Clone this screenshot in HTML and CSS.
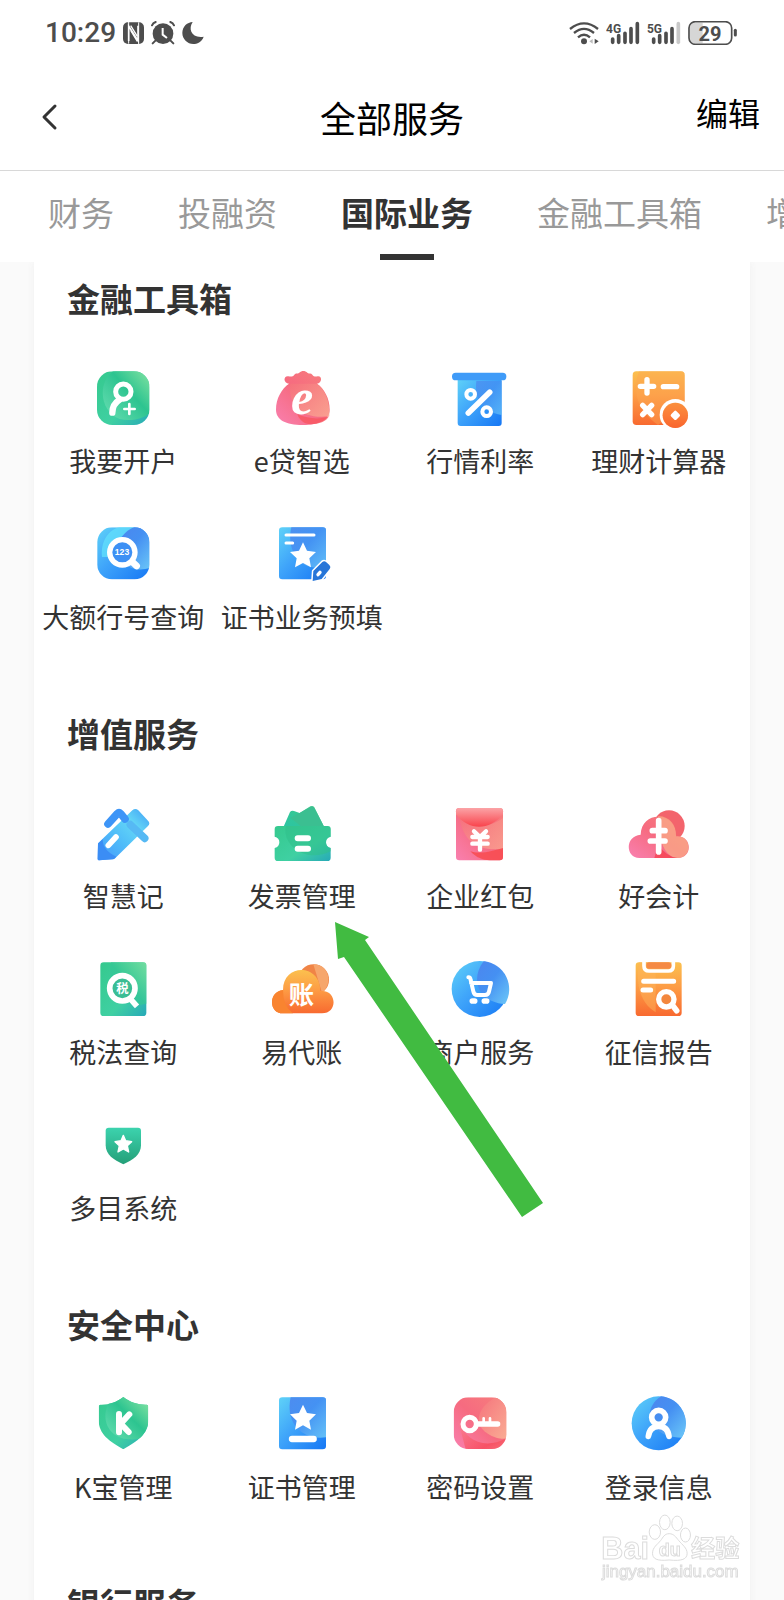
FILE: index.html
```html
<!DOCTYPE html>
<html lang="zh-CN">
<head>
<meta charset="utf-8">
<meta name="viewport" content="width=device-width, initial-scale=1">
<title>全部服务</title>
<link rel="stylesheet" href="styles.css">
</head>
<body>
<svg class="defs" width="0" height="0" aria-hidden="true">
  <defs>
    <linearGradient id="green" x1="1" y1="0" x2="0" y2="1"><stop offset="0" stop-color="#7fe0a0"/><stop offset=".5" stop-color="#35c795"/><stop offset="1" stop-color="#2bc4a4"/></linearGradient>
    <linearGradient id="greenDeep" x1="0" y1="0" x2="1" y2="1"><stop offset="0" stop-color="#35c98e"/><stop offset=".6" stop-color="#3fd0a2"/><stop offset="1" stop-color="#27a9b8"/></linearGradient>
    <linearGradient id="greenSoft" x1="1" y1="0" x2="0" y2="1"><stop offset="0" stop-color="#8ce6a4"/><stop offset=".45" stop-color="#2dc490"/><stop offset="1" stop-color="#6be0b4"/></linearGradient>
    <linearGradient id="teal" x1="0" y1="0" x2="0" y2="1"><stop offset="0" stop-color="#3cd3ae"/><stop offset="1" stop-color="#249f78"/></linearGradient>
    <linearGradient id="blue" x1="0" y1="0" x2="1" y2="1"><stop offset="0" stop-color="#5fd2f8"/><stop offset=".45" stop-color="#3fa4fa"/><stop offset="1" stop-color="#1677f4"/></linearGradient>
    <linearGradient id="blueSoft" x1="0" y1="0" x2="1" y2="1"><stop offset="0" stop-color="#4c86ee"/><stop offset=".45" stop-color="#4590f2"/><stop offset="1" stop-color="#6cc8f8"/></linearGradient>
    <linearGradient id="sky" x1="1" y1="0" x2="0" y2="1"><stop offset="0" stop-color="#3f9df6"/><stop offset=".3" stop-color="#63d6f6"/><stop offset=".6" stop-color="#4fbcf9"/><stop offset="1" stop-color="#4796fb"/></linearGradient>
    <linearGradient id="red" x1="0" y1="1" x2="1" y2="0"><stop offset="0" stop-color="#f980b0"/><stop offset=".5" stop-color="#f66b80"/><stop offset="1" stop-color="#f77f7c"/></linearGradient>
    <linearGradient id="redDeep" x1="0" y1="0" x2="1" y2="1"><stop offset="0" stop-color="#fa8a98"/><stop offset=".7" stop-color="#f74454"/><stop offset="1" stop-color="#f9737a"/></linearGradient>
    <linearGradient id="redSoft" x1="0" y1="0" x2="1" y2="1"><stop offset="0" stop-color="#f5737c"/><stop offset="1" stop-color="#faac94"/></linearGradient>
    <linearGradient id="redTop" x1="0" y1="0" x2="0" y2="1"><stop offset="0" stop-color="#fba3a6"/><stop offset="1" stop-color="#f9434c"/></linearGradient>
    <linearGradient id="orange" x1="0" y1="0" x2="0" y2="1"><stop offset="0" stop-color="#fbc04e"/><stop offset=".45" stop-color="#fd9d45"/><stop offset="1" stop-color="#f86a30"/></linearGradient>
    <clipPath id="clipAccount"><rect x="200" y="63" width="157" height="161" rx="46"/></clipPath>
    <clipPath id="clipBank"><rect x="201" y="51" width="156" height="156" rx="44"/></clipPath>
    <clipPath id="clipKey"><rect x="162" y="51" width="158" height="155" rx="44"/></clipPath>
    <clipPath id="clipShield"><path d="M279 50c-20 16-46 24-69 23q-5 0-5 6v40c0 42 32 64 74 88 42-24 75-46 75-88V79q0-6-5-6c-24 1-50-7-70-23z"/></clipPath>
    <path id="star" d="M0-38 12-13 39-9 19 10 24 37 0 24-24 37-19 10-39-9-12-13z" stroke-linejoin="round"/>
  </defs>
</svg>

<div class="screen">
  <div class="status">
    <div class="status-group">
      <span class="clock">10:29</span>
      <svg width="21" height="22" viewBox="369 65 63 66"><rect x="369" y="66" width="63" height="65" rx="15" fill="#4d4d4d"/><path d="M386 122V77l28 44V76" fill="none" stroke="#fff" stroke-width="5"/><path d="M386 64v66M416 66v65" stroke="#fff" stroke-width="3"/><path d="m392 90 20 33M392 76l20 32" stroke="#fff" stroke-width="4"/></svg>
      <svg class="alarm" width="24" height="24" viewBox="456 63 72 72"><circle cx="492" cy="101" r="31" fill="#4d4d4d"/><path d="m470 121-9 9M514 121l9 9M459 76q3-7 11-10M525 76q-3-7-11-10" fill="none" stroke="#4d4d4d" stroke-width="6" stroke-linecap="round"/><path d="M491 84v20l13 10" fill="none" stroke="#fff" stroke-width="6"/></svg>
      <svg width="22" height="24" viewBox="551 63 66 72"><path d="M583 66c-14 20-4 50 33 44-6 17-20 22-31 22-18 0-33-15-33-33 0-20 15-32 31-33z" fill="#4d4d4d"/></svg>
    </div>
    <div class="status-group">
      <svg width="30" height="24" viewBox="527 63 90 72"><g fill="none" stroke="#4d4d4d" stroke-width="7"><path d="M530 87q42-34 84 0M542 99q30-25 60 0M554 112q18-16 36 0"/></g><circle cx="572" cy="124" r="9" fill="#4d4d4d"/><path d="m588 124 10-7v14z" fill="#bbb"/><path d="m604 116 12 8-12 8z" fill="#4d4d4d"/></svg>
      <svg width="34" height="24" viewBox="640 63 102 72"><text class="net" x="640" y="98">4G</text><path d="M660 117v10M678 107v20M697 100v27M715 86v41M734 71v56" stroke="#4d4d4d" stroke-width="11" stroke-linecap="round"/></svg>
      <svg width="34" height="24" viewBox="764 63 102 72"><text class="net" x="764" y="98">5G</text><path d="M784 117v10M802 107v20M821 100v27M839 86v41" stroke="#4d4d4d" stroke-width="11" stroke-linecap="round"/><path d="M858 71v56" stroke="#c8c8c8" stroke-width="11" stroke-linecap="round"/></svg>
      <svg width="50" height="24" viewBox="887 63 150 72"><path d="M909 68h22v62h-22q-16 0-16-16V84q0-16 16-16z" fill="#d6d6d6"/><rect x="890" y="65" width="128" height="68" rx="19" fill="none" stroke="#4d4d4d" stroke-width="5"/><path d="M1029 91v14" stroke="#4d4d4d" stroke-width="9" stroke-linecap="round"/><text class="level" x="953" y="122">29</text></svg>
    </div>
  </div>

  <header class="bar">
    <button class="back" aria-label="返回"><svg width="18" height="28" viewBox="0 0 18 28"><path d="M15 3 4 14l11 11" fill="none" stroke="#333" stroke-width="3" stroke-linecap="round" stroke-linejoin="round"/></svg></button>
    <h1>全部服务</h1>
    <button class="edit">编辑</button>
  </header>

  <nav class="tabs">
    <button>财务</button>
    <button>投融资</button>
    <button class="active">国际业务</button>
    <button>金融工具箱</button>
    <button>增值服务</button>
  </nav>

  <main class="content">
    <div class="card">
      <section>
        <h2>金融工具箱</h2>
        <ul class="grid">
          <li><button class="item">
            <svg class="icon" viewBox="182 47 192 192"><g clip-path="url(#clipAccount)"><path d="M200 63h157v161H200z" fill="url(#greenDeep)"/><path d="M248 63c-50 38-36 124 20 143 40 10 80-6 92-20V50z" fill="url(#greenSoft)"/></g><g fill="none" stroke="#fff" stroke-linecap="round"><circle cx="279" cy="124" r="23" stroke-width="15"/><path d="M268 148q-22 14-22 39" stroke-width="19"/><path d="M297 161v30M282 176h31" stroke-width="8"/></g></svg>
            <span>我要开户</span></button></li>
          <li><button class="item">
            <svg class="icon" viewBox="718 47 192 192"><path d="M775 100c-18-2-17-24-2-22 8 1 13 2 18-5 4-5 9-2 14-5 9-8 17-8 26 0 5 3 10 0 14 5 5 7 10 6 16 5 14-2 14 20-2 22 22 15 38 44 38 78 0 30-30 46-81 46s-80-16-80-46c0-34 17-63 39-78z" fill="url(#red)"/><path d="M778 100c-6 60 30 108 118 98 2-46-14-82-37-98z" fill="url(#redSoft)" opacity=".8"/><path d="M800 192c34 14 68 16 95 6-8 16-30 24-55 24-18 0-34-12-40-30z" fill="#f8545e" opacity=".75"/><text class="e" x="814" y="192">e</text></svg>
            <span>e贷智选</span></button></li>
          <li><button class="item">
            <svg class="icon" viewBox="145 47 192 192"><path d="M174 85h132v133q0 9-9 9H183q-9 0-9-9z" fill="url(#blue)"/><path d="M230 92c-6 50 14 92 76 102V92z" fill="url(#blueSoft)" opacity=".7"/><rect x="157" y="67" width="163" height="23" rx="11" fill="#3f9bf8"/><path d="M206 188 270 126" stroke="#fff" stroke-width="17" stroke-linecap="round"/><g fill="none" stroke="#fff" stroke-width="12"><circle cx="213" cy="132" r="13"/><circle cx="261" cy="184" r="13"/></g></svg>
            <span>行情利率</span></button></li>
          <li><button class="item">
            <svg class="icon" viewBox="682 47 192 192"><rect x="699" y="63" width="156" height="161" rx="11" fill="url(#orange)"/><path d="M718 63h126q11 0 11 11v90l-80 60c-60-40-80-100-57-161z" fill="#fda653" opacity=".45"/><circle cx="827" cy="193" r="47" fill="#fff"/><circle cx="827" cy="195" r="38" fill="url(#orange)"/><circle cx="827" cy="195" r="38" fill="#f9602c" opacity=".5"/><path d="m827 186 9 9-9 9-9-9z" fill="#fff" stroke="#fff" stroke-width="10" stroke-linejoin="round"/><path d="M742 88v40M722 108h40M791 109h40M729 165l27 28M756 165l-27 28" stroke="#fff" stroke-width="16" stroke-linecap="round"/></svg>
            <span>理财计算器</span></button></li>
          <li><button class="item">
            <svg class="icon" viewBox="182 35 192 192"><g clip-path="url(#clipBank)"><path d="M200 51h157v157H200z" fill="url(#blue)"/><path d="M215 140c-4-50 20-80 52-90h45c-44 30-48 70-40 90z" fill="#62e0fb" opacity=".75"/><path d="M312 50c-50 20-80 90-10 122 20 8 40 6 60 0V50z" fill="url(#blueSoft)"/></g><path d="m300 149 19 18" stroke="#fff" stroke-width="20" stroke-linecap="round"/><circle cx="276" cy="126" r="38" fill="#3d90f4" stroke="#fff" stroke-width="16"/><text class="in-icon num" x="275" y="135">123</text></svg>
            <span>大额行号查询</span></button></li>
          <li><button class="item">
            <svg class="icon" viewBox="718 35 192 192"><rect x="745" y="51" width="141" height="156" rx="10" fill="url(#blue)"/><path d="M782 51h94q10 0 10 10v108c-80 20-120-50-104-118z" fill="url(#blueSoft)" opacity=".85"/><path d="M766 74h84M766 98h20" stroke="#fff" stroke-width="9" stroke-linecap="round"/><use href="#star" x="817" y="134" fill="#fff"/><path d="m846 212 2-30 27-27q6-5 12 1l9 8q6 6 1 12l-24 30z" fill="#2675d8" stroke="#fff" stroke-width="9" stroke-linejoin="round" paint-order="stroke"/><path d="m862 193 6-7" stroke="#fff" stroke-width="10" stroke-linecap="round"/></svg>
            <span>证书业务预填</span></button></li>
        </ul>
      </section>

      <section>
        <h2>增值服务</h2>
        <ul class="grid">
          <li><button class="item">
            <svg class="icon" viewBox="182 29 192 192"><path d="m203 156 103-99q9-8 18 0l29 31q8 8 0 16l-101 99-46 4q-4 0-4-4z" fill="url(#sky)"/><path d="m203 157 14-13q0 34 41 52l-9 8-43 3q-4 0-4-4z" fill="#3b8df5"/><path d="m233 98 28-31q5-5 10 0l13 16" fill="none" stroke="#3d95f7" stroke-width="23" stroke-linecap="round" stroke-linejoin="round"/><path d="m300 100 43 41" stroke="#56b9f4" stroke-width="23" stroke-linecap="round"/><path d="m234 162 23-25" stroke="#fff" stroke-width="17" stroke-linecap="round"/></svg>
            <span>智慧记</span></button></li>
          <li class="target"><button class="item">
            <svg class="icon" viewBox="718 29 192 192"><path d="m758 108 20-46q5-6 12-3l17 6 32-20q7-3 12 3l30 60z" fill="url(#green)"/><path d="m807 65-28 14 36 29h66l-30-59q-5-6-12-3z" fill="#3bbf91"/><path d="M742 104h148q10 0 10 10v22q-14 3-14 17t14 17v29q0 10-10 10H742q-10 0-10-10v-29q14-3 14-17t-14-17v-22q0-10 10-10z" fill="url(#greenDeep)"/><path d="M765 104h125q10 0 10 10v22q-14 3-14 17t14 17v10c-70 36-146-14-135-76z" fill="#2fc08a" opacity=".55"/><path d="M801 141h31M801 172h31" stroke="#fff" stroke-width="18" stroke-linecap="round"/></svg>
            <span>发票管理</span></button>
            <svg class="arrow" viewBox="0 0 210 297" aria-hidden="true"><path d="M0 0 34 15 30 18 208 281 187 295 9 35 3 37z" fill="#41bb41"/></svg>
          </li>
          <li><button class="item">
            <svg class="icon" viewBox="145 29 192 192"><rect x="169" y="50" width="141" height="157" rx="10" fill="url(#red)"/><path d="M310 80v92c-70 10-120-20-130-92 40 30 90 30 130 0z" fill="url(#redSoft)" opacity=".7"/><path d="M212 180c30 10 70-2 98-10v27q0 10-10 10h-30c-20 0-40-8-58-27z" fill="#f84b50" opacity=".85"/><path d="M179 50h121q10 0 10 10v9c-40 50-104 50-141 0v-9q0-10 10-10z" fill="url(#redTop)"/><path d="m223 120 18 17 18-17M241 137v38M218 137h46M218 157h46" fill="none" stroke="#fff" stroke-width="13" stroke-linecap="round" stroke-linejoin="round"/></svg>
            <span>企业红包</span></button></li>
          <li><button class="item">
            <svg class="icon" viewBox="682 29 192 192"><circle cx="808" cy="104" r="47" fill="#f3646c"/><path d="M719 200c-42 0-44-66 4-70 2-72 104-72 107 5 48-4 50 65 5 65z" fill="url(#red)"/><path d="M776 74c38 2 54 30 53 61 48-4 50 65 5 65-30 0-60-40-58-126z" fill="#fab389" opacity=".65"/><path d="M776 160q24 36 58 40h-70z" fill="#f53c48" opacity=".7"/><path d="M777 88v94M758 118h38M752 149h44" stroke="#fff" stroke-width="17" stroke-linecap="round"/></svg>
            <span>好会计</span></button></li>
          <li><button class="item">
            <svg class="icon" viewBox="182 47 192 192"><rect x="210" y="63" width="138" height="161" rx="10" fill="url(#greenDeep)"/><path d="M242 63h96q10 0 10 10v114c-80 20-120-40-106-124z" fill="url(#green)" opacity=".8"/><path d="m302 175 18 20" stroke="#fff" stroke-width="17"/><circle cx="276" cy="141" r="38" fill="#3abd94" stroke="#fff" stroke-width="17"/><text class="in-icon tax" x="276" y="154">税</text></svg>
            <span>税法查询</span></button></li>
          <li><button class="item">
            <svg class="icon" viewBox="718 47 192 192"><circle cx="849" cy="115" r="46" fill="#f08446"/><path d="M848 69c50 0 58 62 26 85z" fill="#f6a66c"/><path d="M757 216c-44 0-44-66 0-70 0-80 112-80 112 3 50-6 54 67 5 67z" fill="url(#orange)"/><path d="M757 146q0 50 30 70h-30c-44 0-44-66 0-70z" fill="#f98430"/><text class="in-icon ledger" x="812" y="189">账</text></svg>
            <span>易代账</span></button></li>
          <li><button class="item">
            <svg class="icon" viewBox="145 47 192 192"><circle cx="240" cy="143" r="84" fill="url(#blue)"/><path d="M252 60c-40 50-20 122 64 128a84 84 0 0 0-64-128z" fill="url(#blueSoft)"/><path d="M206 108q6 0 7 8l8 34q2 11 12 11h23q10 0 12-10l6-26H214" fill="none" stroke="#fff" stroke-width="12" stroke-linecap="round" stroke-linejoin="round"/><path d="M218 179h7M254 179h7" stroke="#fff" stroke-width="17" stroke-linecap="round"/></svg>
            <span>商户服务</span></button></li>
          <li><button class="item">
            <svg class="icon" viewBox="682 47 192 192"><rect x="708" y="63" width="138" height="161" rx="10" fill="url(#orange)"/><path d="M718 63h50v150c-50-30-60-90-50-150z" fill="#fdb45a" opacity=".5"/><path d="M733 60v14q0 15 15 15h58q15 0 15-15V60" fill="none" stroke="#fff" stroke-width="11"/><rect x="740" y="63" width="75" height="19" rx="9" fill="#f58a45"/><path d="M732 120h90M730 146h23" stroke="#fff" stroke-width="15" stroke-linecap="round"/><path d="m818 191 13 17" stroke="#fff" stroke-width="17" stroke-linecap="round"/><circle cx="800" cy="174" r="23" fill="#f3873d" stroke="#fff" stroke-width="16"/></svg>
            <span>征信报告</span></button></li>
          <li><button class="item">
            <svg class="icon" viewBox="182 515 192 192"><path d="M235 559h88q9 0 9 9v44c0 28-24 44-53 57-29-13-53-29-53-57v-44q0-9 9-9z" fill="url(#teal)"/><path d="m279 582 7 16 18 3-13 12 4 19-16-9-16 9 4-19-13-12 18-3z" fill="#fff" stroke="#fff" stroke-width="4" stroke-linejoin="round"/></svg>
            <span>多目系统</span></button></li>
        </ul>
      </section>

      <section>
        <h2>安全中心</h2>
        <ul class="grid">
          <li><button class="item">
            <svg class="icon" viewBox="182 35 192 192"><g clip-path="url(#clipShield)"><path d="M204 50h150v158H204z" fill="url(#greenDeep)"/><path d="M245 50c-46 70-4 124 50 127 30 2 50-4 60-12V50z" fill="url(#greenSoft)"/></g><path d="M266 101v55M297 102l-26 28 24 25" fill="none" stroke="#fff" stroke-width="18" stroke-linecap="round" stroke-linejoin="round"/></svg>
            <span>K宝管理</span></button></li>
          <li><button class="item">
            <svg class="icon" viewBox="718 35 192 192"><rect x="745" y="51" width="141" height="156" rx="10" fill="url(#blue)"/><path d="M780 51h96q10 0 10 10v110c-80 10-122-50-106-120z" fill="url(#blueSoft)" opacity=".9"/><use href="#star" x="817" y="111" fill="#fff"/><path d="M784 176h65" stroke="#fff" stroke-width="19" stroke-linecap="round"/></svg>
            <span>证书管理</span></button></li>
          <li><button class="item">
            <svg class="icon" viewBox="145 35 192 192"><g clip-path="url(#clipKey)"><path d="M162 51h158v156H162z" fill="url(#red)"/><path d="M175 120c20 60 80 90 145 54v40H200z" fill="url(#redDeep)" opacity=".7"/><path d="M290 50c-60 30-80 96 0 122 14 4 24 4 32 2V50z" fill="url(#redSoft)"/></g><circle cx="210" cy="131" r="20" fill="none" stroke="#fff" stroke-width="15"/><path d="M234 131h60" stroke="#fff" stroke-width="16" stroke-linecap="round"/><path d="M252 126v-12M271 126v-12" stroke="#fff" stroke-width="8" stroke-linecap="round"/></svg>
            <span>密码设置</span></button></li>
          <li><button class="item">
            <svg class="icon" viewBox="682 35 192 192"><circle cx="777" cy="129" r="81" fill="url(#blue)"/><path d="M784 48c-60 40-40 122 62 124a81 81 0 0 0-62-124z" fill="url(#blueSoft)"/><g fill="none" stroke="#fff" stroke-linecap="round"><circle cx="777" cy="111" r="21" stroke-width="17"/><path d="M746 168q4-30 31-30t31 30" stroke-width="17"/></g></svg>
            <span>登录信息</span></button></li>
        </ul>
      </section>

      <section>
        <h2>银行服务</h2>
      </section>
    </div>
  </main>

  <svg class="watermark" viewBox="600 400 430 210">
    <g fill="#fff" stroke="#dcdcdc" stroke-width="3"><ellipse cx="765" cy="457" rx="17" ry="22"/><ellipse cx="795" cy="428" rx="16" ry="22"/><ellipse cx="832" cy="431" rx="16" ry="22"/><ellipse cx="857" cy="466" rx="15" ry="21"/><path d="M808 462c14 0 20 10 29 21 10 12 25 22 25 38 0 18-16 24-54 20-38 4-50-4-50-20 0-18 14-26 24-38 8-11 12-21 26-21z"/></g>
    <text class="wm-name" x="604" y="538">Bai</text>
    <text class="wm-du" x="777" y="530">du</text>
    <text class="wm-cn" x="874" y="532">经验</text>
    <text class="wm-url" x="606" y="592">jingyan.baidu.com</text>
  </svg>
</div>
</body>
</html>
```
FILE: styles.css
```css
* {
  box-sizing: border-box;
}

body {
  margin: 0;
  background: #fff;
  color: #333;
  font-family: "Noto Sans CJK SC", "Noto Sans", sans-serif;
}

button {
  margin: 0;
  padding: 0;
  border: 0;
  background: none;
  color: inherit;
  font: inherit;
  cursor: pointer;
}

h1,
h2,
ul {
  margin: 0;
  padding: 0;
}

ul {
  list-style: none;
}

.defs {
  position: absolute;
}

.screen {
  position: relative;
  display: flex;
  flex-direction: column;
  height: 100vh;
  overflow: hidden;
}

/* status bar */
.status {
  display: flex;
  flex: none;
  justify-content: space-between;
  align-items: center;
  height: 66px;
  padding: 0 46px 0 45px;
}

.status-group {
  display: flex;
  align-items: center;
  gap: 7px;
}

.clock {
  color: #4d4d4d;
  font: 500 28px/32px Roboto, sans-serif;
}

.net {
  fill: #4d4d4d;
  font: 700 36px Roboto, sans-serif;
}

.level {
  fill: #4d4d4d;
  font: 700 60px Roboto, sans-serif;
  text-anchor: middle;
}

/* title bar */
.bar {
  display: grid;
  grid-template-columns: 1fr auto 1fr;
  flex: none;
  align-items: center;
  height: 105px;
  padding: 0 24px 2px 40px;
  border-bottom: 1px solid #d8d8d8;
}

.back {
  display: flex;
  justify-self: start;
}

.bar h1 {
  padding-right: 16px;
  color: #000;
  font-size: 36px;
  font-weight: 400;
  line-height: 48px;
}

.edit {
  justify-self: end;
  padding-bottom: 10px;
  color: #000;
  font-size: 32px;
  line-height: 40px;
}

/* category tabs */
.tabs {
  display: flex;
  flex: none;
  gap: 64px;
  height: 91px;
  padding-left: 48px;
  overflow: hidden;
}

.tabs button {
  position: relative;
  flex: none;
  padding-bottom: 10px;
  color: #999;
  font-size: 33px;
  line-height: 40px;
}

.tabs .active {
  color: #333;
  font-weight: 700;
}

.tabs .active::after {
  content: "";
  position: absolute;
  bottom: 2px;
  left: 50%;
  width: 54px;
  height: 6px;
  margin-left: -27px;
  background: #333;
}

/* service list */
.content {
  flex: 1;
  min-height: 0;
  overflow-y: auto;
  background: #fafafa;
  scrollbar-width: none;
}

.card {
  margin: 0 34px;
  padding-top: 16px;
  background: #fff;
  box-shadow: 0 0 8px #f0f0f0;
}

section {
  margin-bottom: 77px;
}

h2 {
  padding-left: 33px;
  font-size: 33px;
  font-weight: 700;
  line-height: 40px;
}

.grid {
  display: grid;
  grid-template-columns: repeat(4, minmax(0, 1fr));
  row-gap: 42px;
  margin-top: 48px;
  padding-right: 2px;
}

.item {
  display: flex;
  flex-direction: column;
  align-items: center;
  gap: 12px;
  width: 100%;
  font-size: 27px;
  line-height: 38px;
  white-space: nowrap;
}

.icon {
  width: 64px;
  height: 64px;
}

.e {
  fill: #fff;
  font: italic 700 150px "Liberation Serif", serif;
  text-anchor: middle;
}

.in-icon {
  fill: #fff;
  font-weight: 700;
  text-anchor: middle;
}

.num {
  font-family: "Liberation Sans", sans-serif;
  font-size: 26px;
}

.tax {
  font-size: 37px;
}

.ledger {
  font-size: 76px;
}

.target {
  position: relative;
}

.arrow {
  position: absolute;
  z-index: 1;
  top: 121px;
  left: 122px;
  width: 210px;
  height: 297px;
  pointer-events: none;
}

.watermark {
  position: absolute;
  right: 41px;
  bottom: 17px;
  width: 143px;
  height: 70px;
  pointer-events: none;
}

.watermark text {
  fill: #fff;
  stroke: #dcdcdc;
  stroke-width: 3px;
}

.wm-name {
  font: 700 92px "Liberation Sans", sans-serif;
}

.wm-du {
  font: 700 54px "Liberation Sans", sans-serif;
}

.wm-cn {
  font: 700 73px "Noto Sans CJK SC", sans-serif;
}

.wm-url {
  font: 400 51px "Liberation Sans", sans-serif;
}
```
